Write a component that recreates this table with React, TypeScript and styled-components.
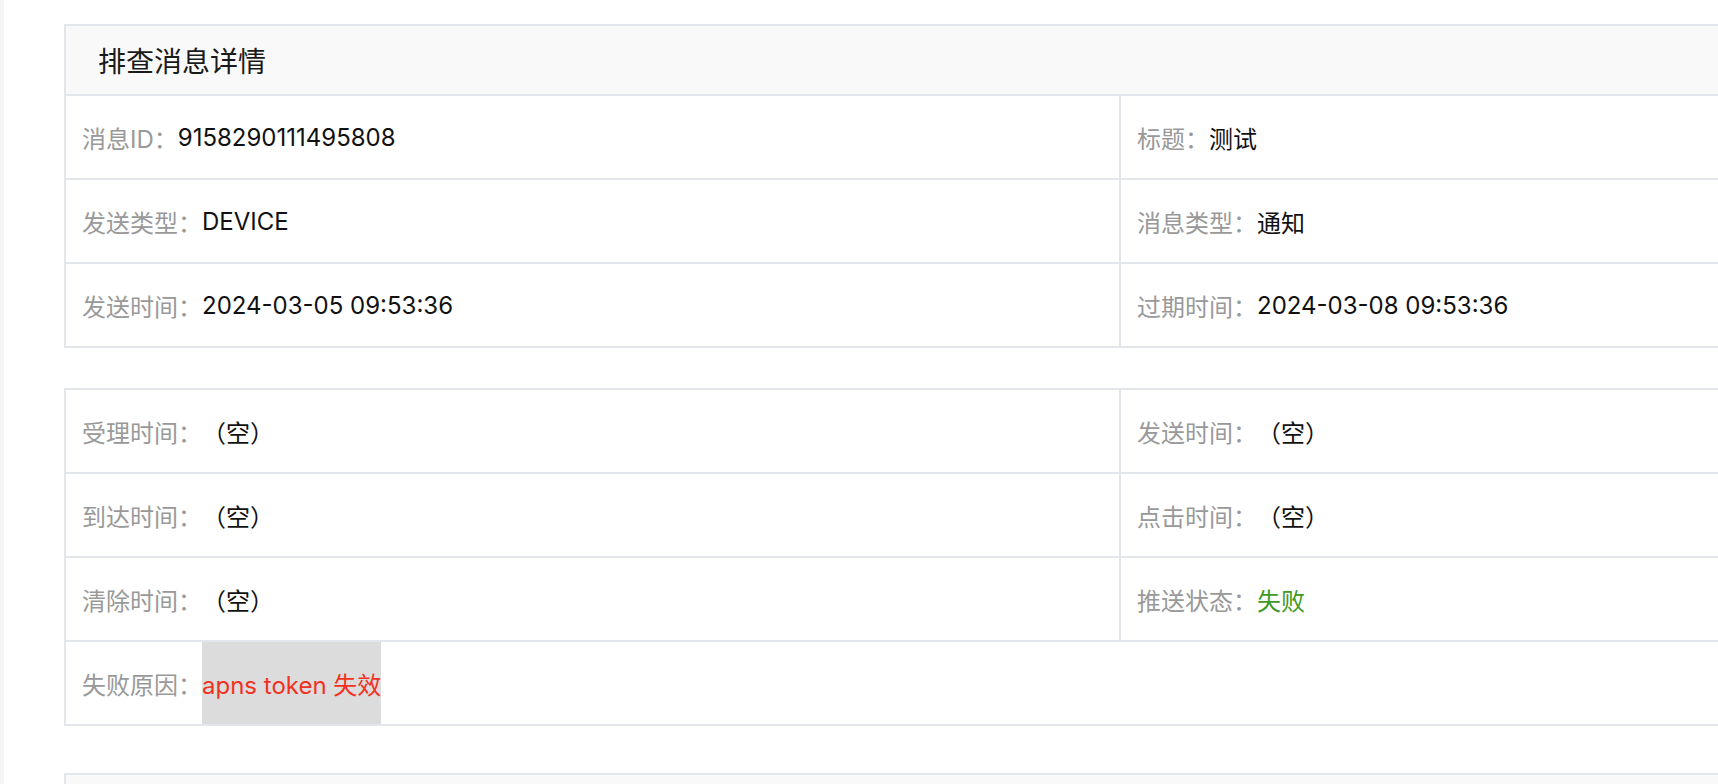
import React from 'react';
import styled, { createGlobalStyle } from 'styled-components';

type Tone = 'default' | 'danger' | 'success';

interface Field {
  label: string;
  value: string;
  tone?: Tone;
  marked?: boolean;
  wide?: boolean;
}

const BASIC: Field[] = [
  { label: '消息ID：', value: '9158290111495808' },
  { label: '标题：', value: '测试' },
  { label: '发送类型：', value: 'DEVICE' },
  { label: '消息类型：', value: '通知' },
  { label: '发送时间：', value: '2024-03-05 09:53:36' },
  { label: '过期时间：', value: '2024-03-08 09:53:36' },
];

const TRACE: Field[] = [
  { label: '受理时间：', value: '（空）' },
  { label: '发送时间：', value: '（空）' },
  { label: '到达时间：', value: '（空）' },
  { label: '点击时间：', value: '（空）' },
  { label: '清除时间：', value: '（空）' },
  { label: '推送状态：', value: '失败', tone: 'success' },
  { label: '失败原因：', value: 'apns token 失效', tone: 'danger', marked: true, wide: true },
];

const TONES: Record<Tone, string> = {
  default: '#111',
  danger: '#f2321f',
  success: '#3c9a25',
};

const LINE = '#e3e7eb';

const App: React.FC = () => {
  return (
    <>
      <GlobalStyle />
      <Page>
        <SideEdge />
        <Main>
          <Card $gap={40}>
            <CardHeader>排查消息详情</CardHeader>
            <FieldGrid fields={BASIC} />
          </Card>
          <Card $gap={47}>
            <FieldGrid fields={TRACE} />
          </Card>
          <Card $gap={0}>
            <CardHeader />
          </Card>
        </Main>
      </Page>
    </>
  );
};

const FieldGrid: React.FC<{ fields: Field[] }> = ({ fields }) => (
  <Grid>
    {fields.map((f, i) => (
      <Cell key={i} $wide={!!f.wide}>
        <Label>{f.label}</Label>
        <Value $tone={f.tone || 'default'} $marked={!!f.marked}>
          {f.value}
        </Value>
      </Cell>
    ))}
  </Grid>
);

export default App;

const GlobalStyle = createGlobalStyle`
  html, body {
    margin: 0;
    padding: 0;
    background: #fff;
    overflow: hidden;
  }
  body {
    font-family: Inter, "Noto Sans CJK SC", sans-serif;
  }
`;

const Page = styled.div`
  display: flex;
  min-height: 784px;
`;

const SideEdge = styled.div`
  width: 4px;
  flex-shrink: 0;
  background: #f4f5f7;
`;

const Main = styled.main`
  padding: 24px 0 0 60px;
`;

const Card = styled.section<{ $gap: number }>`
  width: 2112px;
  box-sizing: border-box;
  border: 2px solid ${LINE};
  margin-bottom: ${p => p.$gap}px;
`;

const CardHeader = styled.div`
  height: 68px;
  display: flex;
  align-items: center;
  padding-left: 32px;
  background: #f9f9f9;
  border-bottom: 2px solid ${LINE};
  font-size: 28px;
  color: #1a1a1a;
`;

const Grid = styled.div`
  display: grid;
  grid-template-columns: 1fr 1fr;
  grid-auto-rows: 82px;
  gap: 2px;
  background: ${LINE};
`;

const Cell = styled.div<{ $wide: boolean }>`
  display: flex;
  align-items: stretch;
  padding-left: 16px;
  background: #fff;
  grid-column: ${p => (p.$wide ? '1 / -1' : 'auto')};
  font-size: 24px;
`;

const Label = styled.span`
  display: flex;
  align-items: center;
  color: #999;
`;

const Value = styled.span<{ $tone: Tone; $marked: boolean }>`
  display: flex;
  align-items: center;
  color: ${p => TONES[p.$tone]};
  background: ${p => (p.$marked ? '#dcdcdc' : 'transparent')};
`;
